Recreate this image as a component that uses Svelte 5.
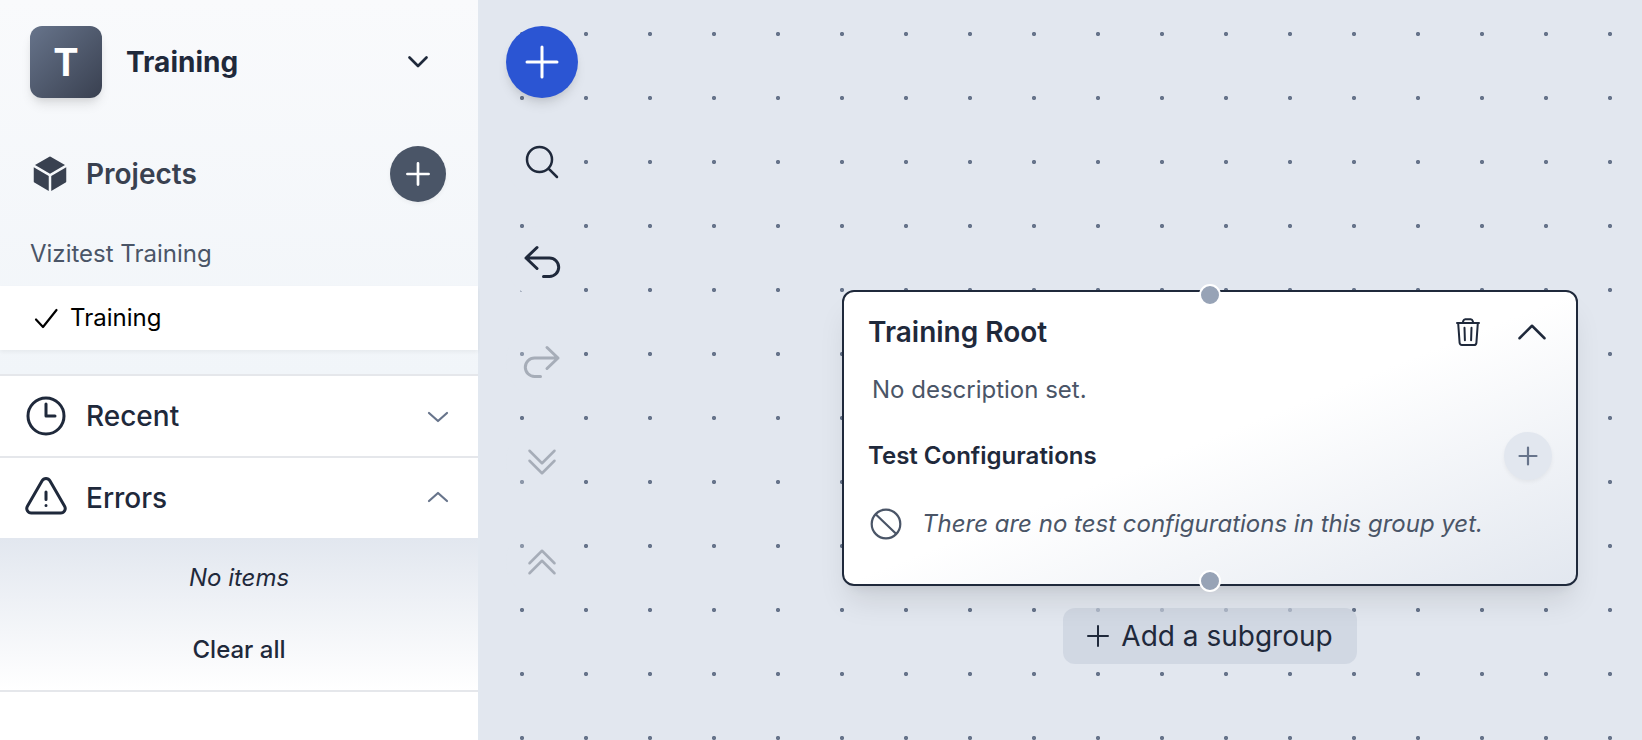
<script>
  let errorsOpen = $state(true);
  let recentOpen = $state(false);
  let cardOpen = $state(true);
</script>

<div class="app">
  <aside class="sidebar">
    <div class="workspace">
      <button class="switcher">
        <span class="avatar">T</span>
        <span class="name">Training</span>
        <svg class="caret" width="24" height="24" viewBox="0 0 24 24"><path d="M3.5 7.5 12 16l8.500-8.500" stroke-width="2.700" /></svg>
      </button>

      <div class="heading">
        <svg class="cube" width="40" height="40" viewBox="0 0 24 24"><path d="M12.378 1.602a.75.75 0 0 0-.756 0L3 6.632l9 5.250 9-5.250-8.622-5.030zM21.750 7.930l-9 5.250v9l8.628-5.032a.75.75 0 0 0 .372-.648V7.930zM11.250 22.180v-9l-9-5.250v8.570a.75.75 0 0 0 .372.648l8.628 5.033z" /></svg>
        <h2>Projects</h2>
        <button class="add-project" aria-label="Add project">
          <svg width="24" height="24" viewBox="0 0 24 24"><path d="M12 1.400v21.200M1.400 12h21.200" stroke-width="2.700" /></svg>
        </button>
      </div>

      <nav aria-label="Projects">
        <a class="project" href="#vizitest">Vizitest Training</a>
        <a class="project selected" href="#training" aria-current="page">
          <svg width="32" height="32" viewBox="0 0 32 32"><path d="m6 17.500 7 7.500L26.500 8" stroke-width="2.200" /></svg>
          Training
        </a>
      </nav>
    </div>

    <section>
      <button class="fold" aria-expanded={recentOpen} onclick={() => (recentOpen = !recentOpen)}>
        <svg class="lead" width="48" height="48" viewBox="0 0 24 24"><path d="M12 6v6h4.500m4.500 0a9 9 0 1 1-18 0 9 9 0 0 1 18 0z" stroke-width="1.500" /></svg>
        <span>Recent</span>
        <svg class="arrow" class:up={recentOpen} width="24" height="24" viewBox="0 0 24 24"><path d="m3 9 9 8 9-8" stroke-width="2.200" /></svg>
      </button>
    </section>

    <section>
      <button class="fold" aria-expanded={errorsOpen} onclick={() => (errorsOpen = !errorsOpen)}>
        <svg class="lead" width="48" height="48" viewBox="0 0 24 24"><path d="M12 9v3.750m-9.303 3.376c-.866 1.500.217 3.374 1.948 3.374h14.710c1.730 0 2.813-1.874 1.948-3.374L13.949 3.378c-.866-1.500-3.032-1.500-3.898 0L2.697 16.126zM12 15.750h.007v.008H12v-.008z" stroke-width="1.500" /></svg>
        <span>Errors</span>
        <svg class="arrow" class:up={errorsOpen} width="24" height="24" viewBox="0 0 24 24"><path d="m3 9 9 8 9-8" stroke-width="2.200" /></svg>
      </button>
      {#if errorsOpen}
        <div class="panel">
          <p>No items</p>
          <button>Clear all</button>
        </div>
      {/if}
    </section>
  </aside>

  <main class="canvas">
    <div class="tools" role="toolbar" aria-label="Canvas tools">
      <button class="primary" aria-label="Add">
        <svg width="48" height="48" viewBox="0 0 24 24"><path d="M12 4.500v15m7.500-7.500h-15" stroke-width="1.500" /></svg>
      </button>
      <button aria-label="Search">
        <svg width="40" height="40" viewBox="0 0 24 24"><path d="m21 21-5.197-5.197m0 0A7.500 7.500 0 1 0 5.196 5.196a7.500 7.500 0 0 0 10.607 10.607z" stroke-width="1.500" /></svg>
      </button>
      <button aria-label="Undo">
        <svg width="40" height="40" viewBox="0 0 40 40"><path d="M15 5.500 4 16l11 10.500M4 16h23.500a9.200 9.200 0 0 1 0 18.400h-6" stroke-width="3" /></svg>
      </button>
      <button aria-label="Redo" disabled>
        <svg width="40" height="40" viewBox="0 0 40 40"><path d="M25 5.500 36 16 25 26.500M36 16H12.500a9.200 9.200 0 0 0 0 18.400h6" stroke-width="3" /></svg>
      </button>
      <button aria-label="Expand all" disabled>
        <svg width="40" height="40" viewBox="0 0 24 24"><path d="m19.500 5.250-7.500 7.500-7.500-7.500m15 6-7.500 7.500-7.500-7.500" stroke-width="1.500" /></svg>
      </button>
      <button aria-label="Collapse all" disabled>
        <svg width="40" height="40" viewBox="0 0 24 24"><path d="m4.500 12.750 7.500-7.500 7.500 7.500m-15 6 7.500-7.500 7.500 7.500" stroke-width="1.500" /></svg>
      </button>
    </div>

    <div class="node">
      <article class="card">
        <span class="handle top"></span>
        <header>
          <h3>Training Root</h3>
          <button aria-label="Delete group">
            <svg width="32" height="32" viewBox="0 0 32 32"><path d="M5 7h22M6.200 7.400l1.400 19.400a2.400 2.400 0 0 0 2.400 2.200h12a2.400 2.400 0 0 0 2.400-2.200l1.400-19.400M10.800 6.600l.5-1.700a2.200 2.200 0 0 1 2-1.600h5.400a2.200 2.200 0 0 1 2 1.600l.5 1.700M12.500 11.700l.4 12.600M19.500 11.700l-.4 12.600" stroke-width="2" /></svg>
          </button>
          <button aria-label="Collapse group" onclick={() => (cardOpen = !cardOpen)}>
            <svg width="40" height="40" viewBox="0 0 24 24"><path d="m4.500 15.750 7.500-7.500 7.500 7.500" stroke-width="1.500" /></svg>
          </button>
        </header>
        {#if cardOpen}
          <p class="description">No description set.</p>
          <div class="subhead">
            <h4>Test Configurations</h4>
            <button aria-label="Add test configuration">
              <svg width="20" height="20" viewBox="0 0 20 20"><path d="M10 1.500v17M1.500 10h17" stroke-width="2.200" /></svg>
            </button>
          </div>
          <p class="empty">
            <svg width="36" height="36" viewBox="0 0 36 36"><circle cx="18" cy="18" r="14.300" stroke-width="2.200" /><path d="m8.200 8.700 19.600 18.800" stroke-width="2.200" /></svg>
            There are no test configurations in this group yet.
          </p>
        {/if}
        <span class="handle bottom"></span>
      </article>
      <button class="subgroup">
        <svg width="22" height="22" viewBox="0 0 22 22"><path d="M11 1v20M1 11h20" stroke-width="2" /></svg>
        Add a subgroup
      </button>
    </div>
  </main>
</div>

<style>
  :global(body) {
    margin: 0;
  }

  .app {
    display: flex;
    min-height: 100vh;
    color: #1f293b;
    font-family: Inter, "Liberation Sans", sans-serif;
    font-size: 24px;
    line-height: 32px;
  }

  button {
    margin: 0;
    padding: 0;
    border: 0;
    background: none;
    color: inherit;
    font: inherit;
    cursor: pointer;
  }

  h2,
  h3,
  h4,
  p {
    margin: 0;
  }

  h2,
  h3 {
    font-size: 28px;
    font-weight: 600;
    line-height: 40px;
  }

  h4 {
    font-size: 24px;
    font-weight: 600;
  }

  svg {
    display: block;
    flex: none;
    fill: none;
    stroke: currentColor;
    stroke-linecap: round;
    stroke-linejoin: round;
  }

  .sidebar {
    box-sizing: border-box;
    flex: none;
    width: 480px;
    border-right: 2px solid #e2e8f0;
    background: #fff;
  }

  .workspace {
    padding: 26px 0 24px;
    background: linear-gradient(#f9fafc, #f1f5f9);
  }

  .switcher {
    display: flex;
    align-items: center;
    gap: 24px;
    width: 100%;
    padding: 0 48px 0 30px;
    text-align: left;
  }

  .avatar {
    display: grid;
    place-items: center;
    width: 72px;
    height: 72px;
    border-radius: 12px;
    background: linear-gradient(to bottom right, #67748b, #394050);
    box-shadow: 0 8px 12px -2px rgb(0 0 0 / 10%), 0 4px 8px -4px rgb(0 0 0 / 10%);
    color: #fff;
    font-size: 38px;
    font-weight: 700;
  }

  .name {
    flex: 1;
    font-size: 28px;
    font-weight: 700;
  }

  .heading {
    display: flex;
    align-items: center;
    gap: 16px;
    padding: 48px 32px 20px 30px;
    color: #394150;
  }

  .heading h2 {
    flex: 1;
  }

  .cube {
    fill: currentColor;
    stroke: none;
  }

  .add-project {
    display: grid;
    place-items: center;
    width: 56px;
    height: 56px;
    border-radius: 50%;
    background: #4a5567;
    box-shadow: 0 2px 4px rgb(0 0 0 / 5%);
    color: #fff;
  }

  .project {
    display: flex;
    align-items: center;
    gap: 8px;
    padding: 16px 30px;
    color: #4a5567;
    text-decoration: none;
  }

  .project.selected {
    background: #fff;
    box-shadow: 0 2px 4px rgb(0 0 0 / 5%);
    color: #000;
  }

  section {
    border-top: 2px solid #e5e7eb;
  }

  section:last-child {
    border-bottom: 2px solid #e5e7eb;
  }

  .fold {
    display: flex;
    align-items: center;
    gap: 16px;
    width: 100%;
    padding: 16px 28px 16px 22px;
    font-size: 28px;
    font-weight: 500;
    text-align: left;
  }

  .fold span {
    flex: 1;
  }

  .arrow {
    color: #67748b;
  }

  .arrow.up {
    transform: rotate(180deg);
  }

  .panel {
    display: grid;
    padding: 4px 0;
    background: linear-gradient(#e2e7ef, #fff);
    text-align: center;
  }

  .panel p {
    padding: 20px 0;
    font-style: italic;
  }

  .panel button {
    padding: 20px 0;
    font-weight: 500;
  }

  .canvas {
    position: relative;
    flex: 1;
    background: radial-gradient(circle, #67748b 0 1.800px, transparent 2.400px) 10px 2px / 64px 64px #e2e7ef;
  }

  .tools {
    display: flex;
    flex-direction: column;
    align-items: flex-start;
    gap: 28px;
    padding: 26px;
  }

  .tools button {
    display: grid;
    place-items: center;
    width: 72px;
    height: 72px;
    border-radius: 50%;
    background: #e2e7ef;
  }

  .tools button:disabled {
    opacity: 0.3;
  }

  .tools .primary {
    background: #2b55d3;
    box-shadow: 0 8px 12px -2px rgb(0 0 0 / 10%), 0 4px 8px -4px rgb(0 0 0 / 10%);
    color: #fff;
  }

  .node {
    position: absolute;
    top: 290px;
    left: 362px;
    display: flex;
    flex-direction: column;
    align-items: center;
    gap: 22px;
  }

  .card {
    position: relative;
    box-sizing: border-box;
    width: 736px;
    padding: 20px 24px 42px;
    border: 2px solid #1f293b;
    border-radius: 12px;
    background: linear-gradient(to bottom right, #fff, #fff, #e2e7ef);
    box-shadow: 0 20px 30px -6px rgb(0 0 0 / 10%), 0 8px 12px -8px rgb(0 0 0 / 10%);
  }

  .card header {
    display: flex;
    align-items: center;
    gap: 28px;
  }

  .card h3,
  .card h4 {
    flex: 1;
  }

  .description {
    padding: 22px 4px 26px;
    color: #4a5567;
  }

  .subhead {
    display: flex;
    align-items: center;
  }

  .subhead button {
    display: grid;
    place-items: center;
    width: 48px;
    height: 48px;
    border-radius: 50%;
    background: #e2e7ef;
    box-shadow: 0 2px 4px rgb(0 0 0 / 5%);
    color: #67748b;
  }

  .empty {
    display: flex;
    align-items: center;
    gap: 18px;
    padding-top: 26px;
    color: #4a5567;
    font-style: italic;
  }

  .handle {
    position: absolute;
    left: 50%;
    width: 18px;
    height: 18px;
    border: 2px solid #fff;
    border-radius: 50%;
    background: #97a3b6;
    transform: translateX(-50%);
  }

  .handle.top {
    top: -8px;
  }

  .handle.bottom {
    bottom: -8px;
  }

  .subgroup {
    display: flex;
    align-items: center;
    gap: 12px;
    padding: 8px 24px;
    border-radius: 12px;
    background: rgb(203 209 222 / 70%);
    font-size: 28px;
    line-height: 40px;
  }
</style>
